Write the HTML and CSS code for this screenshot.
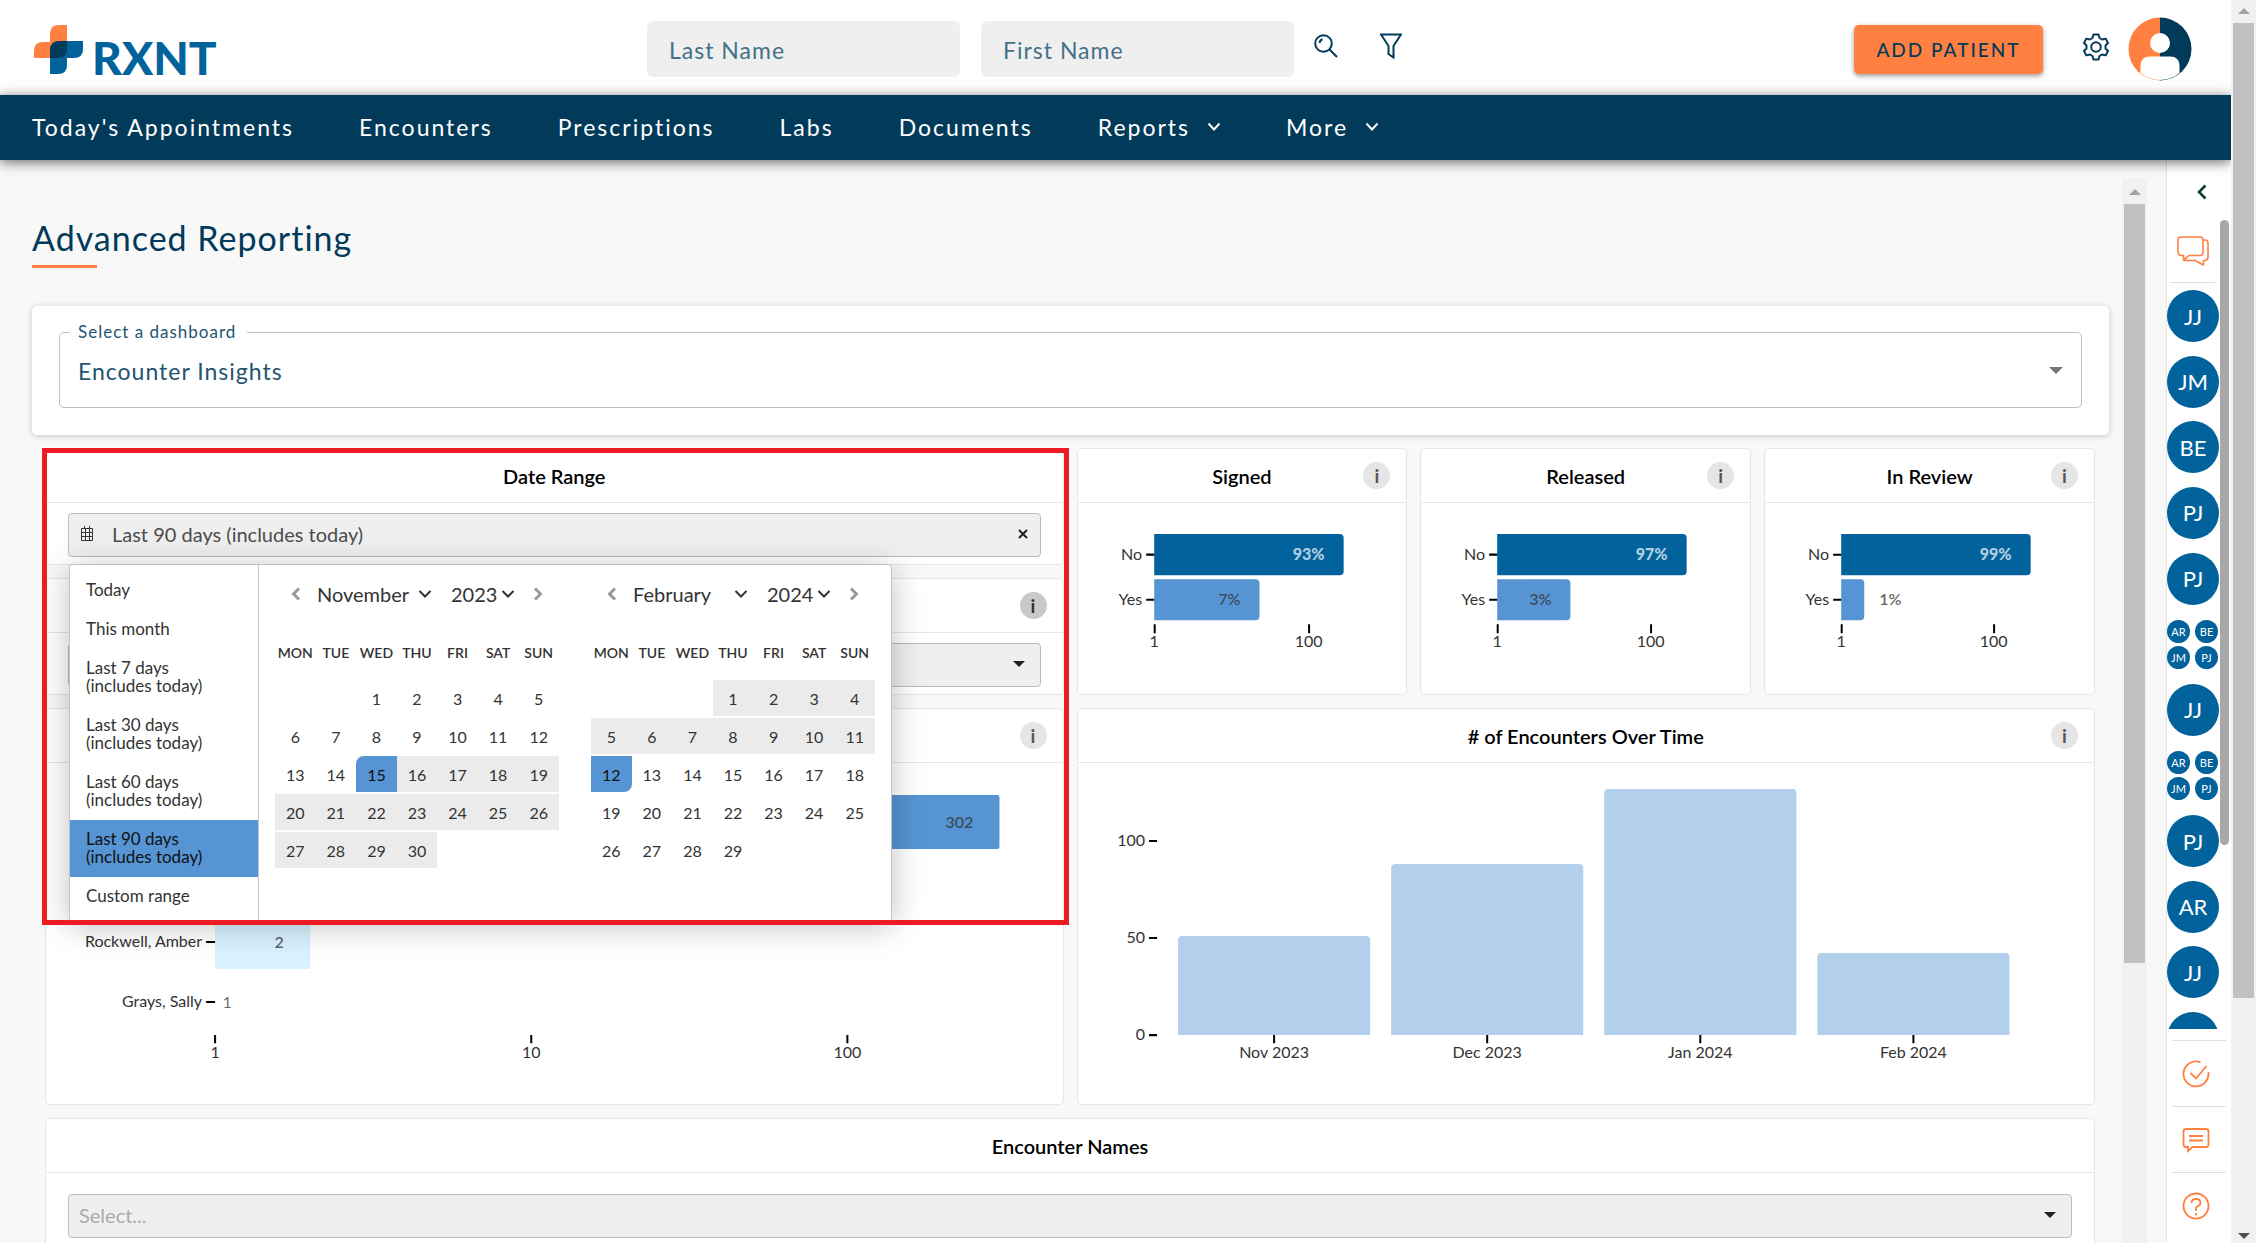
FILE: index.html
```html
<!DOCTYPE html>
<html lang="en">
<head>
    <meta charset="UTF-8">
    <meta name="viewport" content="width=device-width, initial-scale=1.0">
    <title>Advanced Reporting</title>
    <link rel="stylesheet" href="styles.css">
</head>
<body>
    <div class="app">
        <header class="header">
            <div class="logo">
                <svg width="49" height="50" viewBox="0 0 49 50" aria-hidden="true">
                    <path d="M16 33H0V26Q0 17 9 17H16V9Q16 0 25 0H33V24Q33 33 24 33Z" fill="#ff8040"/>
                    <path d="M33 16H49V24Q49 33 40 33H33V40Q33 49 24 49H16V26Q16 16 25 16Z" fill="#02639c"/>
                    <path d="M33 16V24Q33 33 24 33H16V26Q16 16 25 16Z" fill="#023a5a"/>
                </svg>
                <span>RXNT</span>
            </div>
            <form class="search">
                <input type="text" placeholder="Last Name" aria-label="Last Name">
                <input type="text" placeholder="First Name" aria-label="First Name">
                <button type="button" class="icon-btn" aria-label="Search">
                    <svg width="24" height="24" viewBox="0 0 24 24" fill="none" stroke="#023a5a" stroke-width="2"><circle cx="9.500" cy="9.500" r="8.300"/><path d="M15.500 15.500L23 23M5.500 9Q6 6 8.500 5.300"/></svg>
                </button>
                <button type="button" class="icon-btn filter" aria-label="Filter">
                    <svg width="22" height="26" viewBox="0 0 22 26" fill="none" stroke="#023a5a" stroke-width="2"><path d="M1 1.500H21L13.500 13V24.500L8.500 21V13Z"/></svg>
                </button>
            </form>
            <div class="actions">
                <button type="button" class="add-btn">ADD PATIENT</button>
                <button type="button" class="icon-btn settings" aria-label="Settings">
                    <svg width="26" height="28" viewBox="0 0 26 28" fill="none" stroke="#023a5a" stroke-width="2" stroke-linejoin="round"><circle cx="13" cy="14" r="4.800"/><path d="M10.500 1.500H15.500L16.500 5L19 6.500L22.700 5.600L25 10L22.500 12.500V15.500L25 18L22.700 22.400L19 21.500L16.500 23L15.500 26.500H10.500L9.500 23L7 21.500L3.300 22.400L1 18L3.500 15.500V12.500L1 10L3.300 5.600L7 6.500L9.500 5Z"/></svg>
                </button>
                <svg width="64" height="64" viewBox="0 0 64 64" role="img" aria-label="My account">
                    <path d="M32 0.500A31.500 31.500 0 0 0 32 63.500Z" fill="#ff8040"/>
                    <path d="M32 0.500A31.500 31.500 0 0 1 32 63.500Z" fill="#023a5a"/>
                    <circle cx="32" cy="26" r="10" fill="#fff"/>
                    <path d="M12.500 56V49Q12.500 39.500 22 39.500H42Q51.500 39.500 51.500 49V56Q43 63 32 63T12.500 56Z" fill="#fff"/>
                </svg>
            </div>
        </header>

        <nav class="nav">
            <a href="#">Today's Appointments</a>
            <a href="#">Encounters</a>
            <a href="#">Prescriptions</a>
            <a href="#">Labs</a>
            <a href="#">Documents</a>
            <a href="#">Reports <svg class="chev" width="14" height="10" viewBox="0 0 14 10"><path d="M1.500 1.500L7 7.500L12.500 1.500"/></svg></a>
            <a href="#">More <svg class="chev" width="14" height="10" viewBox="0 0 14 10"><path d="M1.500 1.500L7 7.500L12.500 1.500"/></svg></a>
        </nav>

        <div class="page">
            <main class="main">
                <h1>Advanced Reporting</h1>

                <section class="dashboard-card">
                    <fieldset>
                        <legend><label for="dashboard">Select a dashboard</label></legend>
                        <div class="select-wrap">
                            <select id="dashboard"><option>Encounter Insights</option></select>
                            <svg width="14" height="7" viewBox="0 0 14 7"><path d="M0 0H14L7 7Z" fill="#757575"/></svg>
                        </div>
                    </fieldset>
                </section>

                <div class="grid">
                    <div class="column filters">
                        <section class="card">
                            <h2>Date Range</h2>
                            <div class="card-body">
                                <div class="field">
                                    <svg width="14" height="16" viewBox="0 0 14 16" fill="none" stroke="#333"><path d="M1.500 2.500H12.500V14.500H1.500ZM1.500 6.500H12.500M1.500 10.500H12.500M5.500 3V14.500M9.500 3V14.500M4.500 0V3M9.500 0V3"/></svg>
                                    <input type="text" value="Last 90 days (includes today)" aria-label="Date Range">
                                    <button type="button" class="clear" aria-label="Clear"><svg width="10" height="10" viewBox="0 0 10 10"><path d="M1 1L9 9M9 1L1 9" stroke="#222" stroke-width="2"/></svg></button>
                                </div>
                            </div>
                        </section>

                        <section class="card">
                            <h2><button type="button" class="info active">i</button></h2>
                            <div class="card-body">
                                <div class="field select-wrap">
                                    <select aria-label="Filter"><option></option></select>
                                    <svg width="12" height="6" viewBox="0 0 12 6"><path d="M0 0H12L6 6Z" fill="#222"/></svg>
                                </div>
                            </div>
                        </section>

                        <section class="card">
                            <h2><button type="button" class="info">i</button></h2>
                            <svg class="chart" viewBox="0 0 1016 341">
                                <rect x="169" y="32" width="784" height="54" rx="2" fill="#5694d3"/>
                                <rect x="169" y="152" width="95" height="54" rx="1" fill="#d9f2ff"/>
                                <path class="tick" d="M160 179H169M160 239H169M169 272V280M485 272V280M801 272V280"/>
                                <text class="value" x="913" y="65">302</text>
                                <text class="value" x="233" y="185">2</text>
                                <text class="value thin" x="181" y="245">1</text>
                                <text class="row-label" x="156" y="184">Rockwell, Amber</text>
                                <text class="row-label" x="156" y="244">Grays, Sally</text>
                                <text x="169" y="295">1</text>
                                <text x="485" y="295">10</text>
                                <text x="801" y="295">100</text>
                            </svg>
                        </section>

                        <div class="picker">
                            <div class="presets">
                                <button type="button">Today</button>
                                <button type="button">This month</button>
                                <button type="button">Last 7 days<br>(includes today)</button>
                                <button type="button">Last 30 days<br>(includes today)</button>
                                <button type="button">Last 60 days<br>(includes today)</button>
                                <button type="button" class="active">Last 90 days<br>(includes today)</button>
                                <button type="button">Custom range</button>
                            </div>
                            <div class="calendar">
                                <div class="cal-head">
                                    <button type="button" class="arrow" aria-label="Previous month"><svg width="10" height="14" viewBox="0 0 10 14"><path d="M8 1.500L2.500 7L8 12.500"/></svg></button>
                                    <div class="select-wrap month">
                                        <select aria-label="Start month"><option>November</option></select>
                                        <svg class="chev" width="14" height="10" viewBox="0 0 14 10"><path d="M1.500 2L7 7.500L12.500 2"/></svg>
                                    </div>
                                    <div class="select-wrap year">
                                        <select aria-label="Start year"><option>2023</option></select>
                                        <svg class="chev" width="14" height="10" viewBox="0 0 14 10"><path d="M1.500 2L7 7.500L12.500 2"/></svg>
                                    </div>
                                    <button type="button" class="arrow" aria-label="Next month"><svg width="10" height="14" viewBox="0 0 10 14"><path d="M2 1.500L7.500 7L2 12.500"/></svg></button>
                                </div>
                                <table>
                                    <tr><th>MON</th><th>TUE</th><th>WED</th><th>THU</th><th>FRI</th><th>SAT</th><th>SUN</th></tr>
                                    <tr><td></td><td></td><td>1</td><td>2</td><td>3</td><td>4</td><td>5</td></tr>
                                    <tr><td>6</td><td>7</td><td>8</td><td>9</td><td>10</td><td>11</td><td>12</td></tr>
                                    <tr><td>13</td><td>14</td><td class="start">15</td><td class="in">16</td><td class="in">17</td><td class="in">18</td><td class="in">19</td></tr>
                                    <tr><td class="in">20</td><td class="in">21</td><td class="in">22</td><td class="in">23</td><td class="in">24</td><td class="in">25</td><td class="in">26</td></tr>
                                    <tr><td class="in">27</td><td class="in">28</td><td class="in">29</td><td class="in">30</td><td></td><td></td><td></td></tr>
                                </table>
                            </div>
                            <div class="calendar">
                                <div class="cal-head">
                                    <button type="button" class="arrow" aria-label="Previous month"><svg width="10" height="14" viewBox="0 0 10 14"><path d="M8 1.500L2.500 7L8 12.500"/></svg></button>
                                    <div class="select-wrap month">
                                        <select aria-label="End month"><option>February</option></select>
                                        <svg class="chev" width="14" height="10" viewBox="0 0 14 10"><path d="M1.500 2L7 7.500L12.500 2"/></svg>
                                    </div>
                                    <div class="select-wrap year">
                                        <select aria-label="End year"><option>2024</option></select>
                                        <svg class="chev" width="14" height="10" viewBox="0 0 14 10"><path d="M1.500 2L7 7.500L12.500 2"/></svg>
                                    </div>
                                    <button type="button" class="arrow" aria-label="Next month"><svg width="10" height="14" viewBox="0 0 10 14"><path d="M2 1.500L7.500 7L2 12.500"/></svg></button>
                                </div>
                                <table>
                                    <tr><th>MON</th><th>TUE</th><th>WED</th><th>THU</th><th>FRI</th><th>SAT</th><th>SUN</th></tr>
                                    <tr><td></td><td></td><td></td><td class="in">1</td><td class="in">2</td><td class="in">3</td><td class="in">4</td></tr>
                                    <tr><td class="in">5</td><td class="in">6</td><td class="in">7</td><td class="in">8</td><td class="in">9</td><td class="in">10</td><td class="in">11</td></tr>
                                    <tr><td class="end">12</td><td>13</td><td>14</td><td>15</td><td>16</td><td>17</td><td>18</td></tr>
                                    <tr><td>19</td><td>20</td><td>21</td><td>22</td><td>23</td><td>24</td><td>25</td></tr>
                                    <tr><td>26</td><td>27</td><td>28</td><td>29</td><td></td><td></td><td></td></tr>
                                </table>
                            </div>
                        </div>
                        <div class="highlight"></div>
                    </div>

                    <div class="column">
                        <div class="status-row">
                            <section class="card">
                                <h2>Signed <button type="button" class="info">i</button></h2>
                                <svg class="chart" viewBox="0 0 328 190">
                                    <path d="M76 31H261Q265 31 265 35V68Q265 72 261 72H76Z" fill="#02639c"/>
                                    <path d="M76 76H177Q181 76 181 80V113Q181 117 177 117H76Z" fill="#5694d3"/>
                                    <path class="tick" d="M68 51.500H76M68 96.500H76M76.500 121V130M230.500 121V130"/>
                                    <text class="value light" x="230" y="57">93%</text>
                                    <text class="value" x="151" y="102">7%</text>
                                    <text class="row-label" x="64" y="57">No</text>
                                    <text class="row-label" x="64" y="102">Yes</text>
                                    <text x="76" y="144">1</text>
                                    <text x="230" y="144">100</text>
                                </svg>
                            </section>
                            <section class="card">
                                <h2>Released <button type="button" class="info">i</button></h2>
                                <svg class="chart" viewBox="0 0 328 190">
                                    <path d="M76 31H261Q265 31 265 35V68Q265 72 261 72H76Z" fill="#02639c"/>
                                    <path d="M76 76H145Q149 76 149 80V113Q149 117 145 117H76Z" fill="#5694d3"/>
                                    <path class="tick" d="M68 51.500H76M68 96.500H76M76.500 121V130M229.500 121V130"/>
                                    <text class="value light" x="230" y="57">97%</text>
                                    <text class="value" x="119" y="102">3%</text>
                                    <text class="row-label" x="64" y="57">No</text>
                                    <text class="row-label" x="64" y="102">Yes</text>
                                    <text x="76" y="144">1</text>
                                    <text x="229" y="144">100</text>
                                </svg>
                            </section>
                            <section class="card">
                                <h2>In Review <button type="button" class="info">i</button></h2>
                                <svg class="chart" viewBox="0 0 328 190">
                                    <path d="M76 31H261Q265 31 265 35V68Q265 72 261 72H76Z" fill="#02639c"/>
                                    <path d="M76 76H95Q99 76 99 80V113Q99 117 95 117H76Z" fill="#5694d3"/>
                                    <path class="tick" d="M68 51.500H76M68 96.500H76M76.500 121V130M228.500 121V130"/>
                                    <text class="value light" x="230" y="57">99%</text>
                                    <text class="value" x="125" y="102">1%</text>
                                    <text class="row-label" x="64" y="57">No</text>
                                    <text class="row-label" x="64" y="102">Yes</text>
                                    <text x="76" y="144">1</text>
                                    <text x="228" y="144">100</text>
                                </svg>
                            </section>
                        </div>

                        <section class="card">
                            <h2># of Encounters Over Time <button type="button" class="info">i</button></h2>
                            <svg class="chart" viewBox="0 0 1016 341">
                                <g fill="#b2d0eb">
                                    <path d="M100 272V177Q100 173 104 173H288Q292 173 292 177V272Z"/>
                                    <path d="M313 272V105Q313 101 317 101H501Q505 101 505 105V272Z"/>
                                    <path d="M526 272V30Q526 26 530 26H714Q718 26 718 30V272Z"/>
                                    <path d="M739 272V194Q739 190 743 190H927Q931 190 931 194V272Z"/>
                                </g>
                                <path class="tick" d="M71 78H79M71 175H79M71 272H79M196 272V280M409 272V280M622 272V280M835 272V280"/>
                                <text class="row-label" x="67" y="83">100</text>
                                <text class="row-label" x="67" y="180">50</text>
                                <text class="row-label" x="67" y="277">0</text>
                                <text x="196" y="295">Nov 2023</text>
                                <text x="409" y="295">Dec 2023</text>
                                <text x="622" y="295">Jan 2024</text>
                                <text x="835" y="295">Feb 2024</text>
                            </svg>
                        </section>
                    </div>

                    <section class="card wide">
                        <h2>Encounter Names</h2>
                        <div class="card-body">
                            <div class="field select-wrap">
                                <select class="placeholder" aria-label="Encounter Names"><option>Select...</option></select>
                                <svg width="12" height="6" viewBox="0 0 12 6"><path d="M0 0H12L6 6Z" fill="#222"/></svg>
                            </div>
                        </div>
                    </section>
                </div>
            </main>

            <div class="scrollbar inner">
                <svg width="12" height="6" viewBox="0 0 12 6"><path d="M0 6H12L6 0Z" fill="#a3a3a3"/></svg>
                <div class="thumb"></div>
            </div>

            <aside class="rail">
                <button type="button" class="collapse" aria-label="Expand panel"><svg width="10" height="16" viewBox="0 0 10 16"><path d="M8.500 1.500L2 8L8.500 14.500" fill="none" stroke="#0b4030" stroke-width="2.600"/></svg></button>
                <button type="button" class="chat" aria-label="Chat">
                    <svg width="32" height="30" viewBox="0 0 32 30" fill="none" stroke="#ff8040" stroke-width="1.600" stroke-linejoin="round"><path d="M4 1H23Q26 1 26 4V16Q26 19.500 23 19.500H12L6.500 24V19.500H4Q1 19 1 16V4Q1 1 4 1Z"/><path d="M26 4H28Q31 4 31 7V21Q31 24 28 24.500H26.500V29L18 24.500H7L10 21"/></svg>
                </button>
                <div class="people">
                    <ul>
                        <li class="person">JJ</li>
                        <li class="person">JM</li>
                        <li class="person">BE</li>
                        <li class="person">PJ</li>
                        <li class="person">PJ</li>
                        <li class="group"><span>AR</span><span>BE</span><span>JM</span><span>PJ</span></li>
                        <li class="person">JJ</li>
                        <li class="group"><span>AR</span><span>BE</span><span>JM</span><span>PJ</span></li>
                        <li class="person">PJ</li>
                        <li class="person">AR</li>
                        <li class="person">JJ</li>
                        <li class="person"></li>
                    </ul>
                </div>
                <div class="rail-thumb"></div>
                <div class="tools">
                    <button type="button" aria-label="Tasks"><svg width="28" height="28" viewBox="0 0 28 28"><path d="M18.500 2.300A12.500 12.500 0 1 0 26.300 12M8.500 13L14 18.500L24.500 6"/></svg></button>
                    <button type="button" aria-label="Messages"><svg width="28" height="28" viewBox="0 0 28 28"><path d="M4 3H24Q26.500 3 26.500 5.500V18.500Q26.500 21 24 21H10.500L6 25V21H4Q1.500 21 1.500 18.500V5.500Q1.500 3 4 3ZM7 10H21M7 14.500H21"/></svg></button>
                    <button type="button" aria-label="Help"><svg width="28" height="28" viewBox="0 0 28 28"><circle cx="14" cy="14" r="12.500"/><path d="M9.500 11Q9.500 7 14 7T18.500 11Q18.500 13 16 14T14 17.500V19M14 21V23.500"/></svg></button>
                </div>
            </aside>
        </div>
    </div>

    <div class="scrollbar outer">
        <svg width="12" height="6" viewBox="0 0 12 6"><path d="M0 6H12L6 0Z" fill="#a3a3a3"/></svg>
        <div class="thumb"></div>
        <svg class="down" width="12" height="6" viewBox="0 0 12 6"><path d="M0 0H12L6 6Z" fill="#505050"/></svg>
    </div>
</body>
</html>
```

FILE: styles.css
```css
* {
    box-sizing: border-box;
}
body {
    margin: 0;
    height: 100vh;
    display: flex;
    overflow: hidden;
    font-family: Lato, "Open Sans", sans-serif;
    font-size: 16px;
    color: #333;
    background-color: #f8f8f8;
}
button, input, select {
    font: inherit;
    color: inherit;
    letter-spacing: inherit;
    background: none;
    border: none;
    padding: 0;
    margin: 0;
}
svg {
    display: block;
    flex-shrink: 0;
}
select {
    appearance: none;
    width: 100%;
}
.app {
    flex: 1;
    min-width: 0;
    display: flex;
    flex-direction: column;
}

/* header */
.header {
    height: 95px;
    flex-shrink: 0;
    display: grid;
    grid-template-columns: 613px 1fr auto;
    align-items: center;
    padding: 0 39px 0 34px;
    background-color: #fff;
}
.logo {
    display: flex;
    align-items: flex-start;
    gap: 9px;
    margin-top: 4px;
    height: 50px;
    font-size: 46px;
    font-weight: 900;
    line-height: 66px;
    color: #02639c;
}
.search, .actions {
    display: flex;
    align-items: center;
}
.actions {
    padding-top: 2px;
}
.search input {
    width: 313px;
    height: 56px;
    margin: 2px 21px 0 0;
    padding: 3px 22px 0;
    border-radius: 6px;
    background-color: #efefef;
    font-size: 23px;
    letter-spacing: 1px;
}
.search input::placeholder {
    color: #44708a;
    opacity: 1;
}
.search .icon-btn {
    margin: -3px 0 0 -1px;
}
.search .filter {
    margin-left: 42px;
}
.add-btn {
    width: 189px;
    height: 49px;
    margin: 2px 40px 0 0;
    border-radius: 5px;
    background-color: #ff8040;
    box-shadow: 0 2px 5px rgba(0,0,0,0.4);
    color: #023a5a;
    font-size: 19px;
    font-weight: 500;
    letter-spacing: 2px;
}
.settings {
    margin: -4px 19px 0 0;
}

/* navigation */
.nav {
    height: 65px;
    flex-shrink: 0;
    display: flex;
    align-items: center;
    gap: 65px;
    padding: 0 32px 2px;
    background-color: #023a5a;
    box-shadow: 0 2px 12px rgba(0,0,0,0.6);
    position: relative;
    z-index: 2;
}
.nav a {
    display: flex;
    align-items: center;
    gap: 17px;
    color: #fff;
    font-size: 23px;
    letter-spacing: 2px;
    text-decoration: none;
}
.chev path {
    fill: none;
    stroke: currentColor;
    stroke-width: 2;
}

/* page */
.page {
    flex: 1;
    min-height: 0;
    display: flex;
}
.main {
    flex: 1;
    min-width: 0;
    padding: 56px 13px 0 32px;
    overflow: hidden;
}
h1 {
    position: relative;
    margin: 0 0 38px;
    height: 52px;
    line-height: 44px;
    font-size: 34px;
    font-weight: 400;
    letter-spacing: 1px;
    color: #023a5a;
}
h1::after {
    content: "";
    position: absolute;
    left: 0;
    bottom: 0;
    width: 65px;
    height: 3px;
    background-color: #ff8040;
}
.dashboard-card {
    padding: 17px 27px 27px;
    border-radius: 5px;
    background-color: #fff;
    box-shadow: 0 1px 6px rgba(0,0,0,0.2);
    color: #23536f;
}
fieldset {
    margin: 0;
    min-width: 0;
    padding: 0 18px;
    border: 1px solid #c0c0c0;
    border-radius: 5px;
}
legend {
    margin-left: -8px;
    padding: 0 11px 0 8px;
    height: 18px;
    line-height: 18px;
    font-size: 17px;
    letter-spacing: 1px;
}
.select-wrap {
    display: grid;
    align-items: center;
}
.select-wrap select, .select-wrap svg {
    grid-area: 1 / 1;
}
.select-wrap svg {
    justify-self: end;
    pointer-events: none;
}
fieldset .select-wrap {
    height: 66px;
    padding-bottom: 7px;
    font-size: 23px;
    letter-spacing: 1px;
}
.grid {
    display: grid;
    grid-template-columns: 1fr 1fr;
    gap: 13px;
    padding: 13px 14px 0 13px;
}
.column {
    display: flex;
    flex-direction: column;
    gap: 13px;
    min-width: 0;
    position: relative;
}
.card {
    border: 1px solid #e6e6e6;
    border-radius: 5px;
    background-color: #fff;
}
.card h2 {
    display: flex;
    align-items: center;
    justify-content: center;
    position: relative;
    margin: 0;
    height: 54px;
    border-bottom: 1px solid #e6e6e6;
    font-size: 20px;
    font-weight: 600;
    color: #000;
}
.info {
    position: absolute;
    right: 16px;
    width: 27px;
    height: 27px;
    border-radius: 50%;
    background-color: #e5e5e5;
    color: #555;
    font-size: 19px;
    font-weight: 700;
    line-height: 27px;
}
.info.active {
    background-color: #c9c9c9;
    color: #333;
}
.card-body {
    padding: 10px 22px 7px;
}
.field {
    display: flex;
    align-items: center;
    height: 44px;
    padding: 0 12px 2px 11px;
    border: 1px solid #bbb;
    border-radius: 4px;
    background-color: #efefef;
    font-size: 20px;
    color: #4d4d4d;
}
.field.select-wrap {
    display: grid;
    padding: 0 15px 2px 10px;
}
.field input {
    flex: 1;
    margin-left: 18px;
}
.placeholder {
    color: #aaa;
}
.wide {
    grid-column: 1 / 3;
}
.wide .card-body {
    padding: 21px 22px;
}
.status-row {
    display: grid;
    grid-template-columns: repeat(3, 1fr);
    gap: 13px;
    height: 247px;
}

/* charts */
.chart {
    width: 100%;
}
.chart text {
    font-size: 16px;
    fill: #333;
    text-anchor: middle;
}
.chart .row-label {
    text-anchor: end;
}
.chart .value {
    font-weight: 600;
    fill: #333;
    fill-opacity: 0.75;
}
.chart .light {
    font-weight: 900;
    fill: #c8dcea;
    fill-opacity: 0.9;
}
.chart .thin {
    font-weight: 400;
}
.tick {
    stroke: #000;
    stroke-width: 2;
}

/* date picker */
.picker {
    position: absolute;
    top: 116px;
    left: 24px;
    z-index: 1;
    display: flex;
    width: 823px;
    height: 358px;
    border: 1px solid #c4c4c4;
    border-radius: 4px;
    background-color: #fff;
    box-shadow: 0 4px 32px rgba(0,0,0,0.25);
}
.highlight {
    position: absolute;
    z-index: 2;
    top: 0;
    left: -3px;
    right: -5px;
    height: 477px;
    border: 5px solid #ed1c24;
    pointer-events: none;
}
.presets {
    display: flex;
    flex-direction: column;
    width: 189px;
    padding-top: 6px;
    border-right: 1px solid #c4c4c4;
}
.presets button {
    padding: 10px 16px 11px;
    font-size: 17px;
    line-height: 18px;
    text-align: left;
}
.presets .active {
    background-color: #5694d3;
    color: #111;
}
.calendar {
    width: 284px;
    margin: 13px 16px 0;
}
.cal-head {
    display: flex;
    align-items: center;
    height: 32px;
    padding-left: 16px;
    font-size: 20px;
}
.arrow path {
    fill: none;
    stroke: #999;
    stroke-width: 3;
}
.month {
    width: 115px;
    margin: 0 19px 0 16px;
}
.year {
    width: 64px;
    margin-right: 18px;
}
.calendar table {
    width: 100%;
    margin-top: 14px;
    table-layout: fixed;
    border-collapse: separate;
    border-spacing: 0 2px;
    text-align: center;
}
.calendar th {
    height: 52px;
    padding: 0;
    font-size: 14px;
    font-weight: 600;
}
.calendar td {
    height: 36px;
    padding: 0;
}
.in {
    background-color: #ebebeb;
}
.start, .end {
    background-color: #5694d3;
    color: #111;
}
.start {
    border-top-left-radius: 8px;
}
.end {
    border-bottom-right-radius: 8px;
}

/* scrollbars */
.scrollbar {
    display: flex;
    flex-direction: column;
    align-items: center;
    width: 25px;
    flex-shrink: 0;
    background-color: #f1f1f1;
    position: relative;
    z-index: 3;
}
.scrollbar .thumb {
    width: 21px;
    background-color: #c1c1c1;
}
.inner {
    margin: 19px 19px 0 0;
    padding-top: 10px;
    z-index: 0;
}
.inner .thumb {
    height: 759px;
    margin-top: 9px;
}
.outer {
    padding: 8px 0 4px;
}
.outer .thumb {
    height: 975px;
    margin-top: 9px;
}
.outer .down {
    margin-top: auto;
}

/* right rail */
.rail {
    position: relative;
    width: 65px;
    display: flex;
    flex-direction: column;
    border-left: 1px solid #e4e4e4;
    background-color: #fff;
}
.collapse {
    margin: 24px 0 0 30px;
    width: 10px;
}
.chat {
    margin: 36px 16px 0 3px;
    padding: 0 0 16px 7px;
    border-bottom: 1px solid #ddd;
}
.people {
    flex: 1;
    min-height: 0;
    margin-top: 7px;
    overflow: hidden;
}
.people ul {
    display: flex;
    flex-direction: column;
    justify-content: space-between;
    width: 52px;
    height: 774px;
    margin: 0;
    padding: 0;
    list-style: none;
}
.person, .group span {
    display: flex;
    align-items: center;
    justify-content: center;
    border-radius: 50%;
    background-color: #02639c;
    color: #fff;
}
.person {
    width: 52px;
    height: 52px;
    font-size: 22px;
}
.group {
    display: grid;
    grid-template-columns: 23px 23px;
    gap: 3px 5px;
    height: 52px;
    align-content: center;
}
.group span {
    height: 23px;
    font-size: 11px;
}
.rail-thumb {
    position: absolute;
    top: 60px;
    right: 2px;
    width: 9px;
    height: 625px;
    border-radius: 5px;
    background-color: #a8a8a8;
}
.tools {
    margin: 11px 5px 0 6px;
}
.tools button {
    display: flex;
    align-items: center;
    justify-content: center;
    width: 100%;
    height: 66px;
    padding-right: 7px;
    border-top: 1px solid #ddd;
}
.tools button:last-child {
    height: 71px;
    padding-bottom: 4px;
}
.tools svg {
    fill: none;
    stroke: #ff8040;
    stroke-width: 1.8px;
}
```
